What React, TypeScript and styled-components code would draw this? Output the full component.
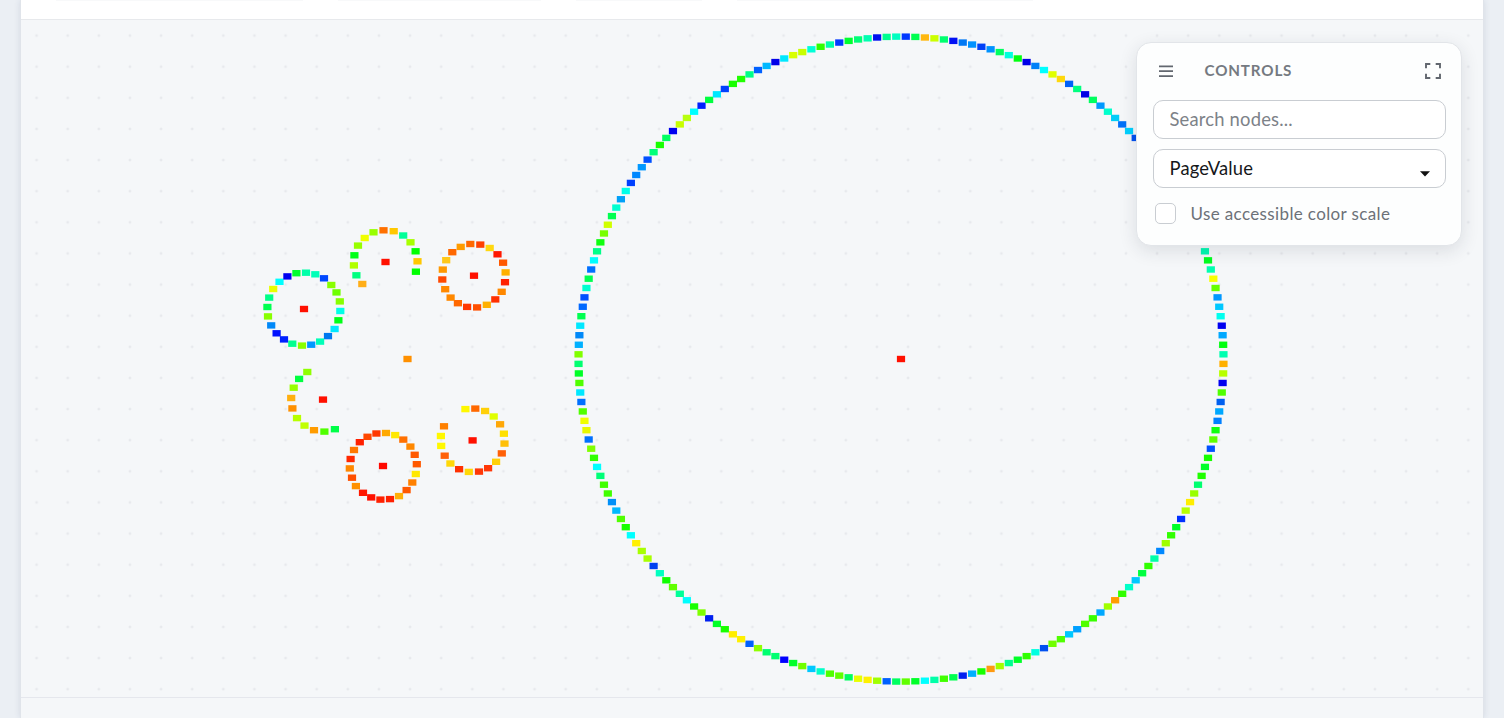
import React from "react";
import styled, { createGlobalStyle } from "styled-components";

type GraphNode = [x: number, y: number, color: string];

const NODE_WIDTH = 8.2;
const NODE_HEIGHT = 6.4;

const GlobalStyle = createGlobalStyle`
  body {
    margin: 0;
    background: #ebeff4;
    font-family: "Lato", "Liberation Sans", sans-serif;
    overflow: hidden;
  }

  * {
    box-sizing: border-box;
  }
`;

const Page = styled.div`
  height: 718px;
  padding: 0 20px;
  overflow: hidden;
`;

const Card = styled.div`
  display: flex;
  flex-direction: column;
  width: 1464px;
  height: 100%;
  border: 1px solid #e0e4ea;
  border-width: 0 1px;
  background: #ffffff;
  box-shadow: 0 0 6px rgba(40, 60, 100, 0.12);
`;

const TopStrip = styled.div`
  display: flex;
  gap: 35px;
  height: 19px;
  padding-left: 35px;
`;

const StripItem = styled.div<{ $width: number }>`
  width: ${(props) => props.$width}px;
  height: 1px;
  background: #f8f9fa;
`;

const Stage = styled.div`
  position: relative;
  height: 679px;
  border-top: 1px solid #e7e9ec;
  border-bottom: 1px solid #e5e7ed;
  background-color: #f5f7f9;
  background-image: radial-gradient(circle, #e7e9ed 0.8px, transparent 1.8px);
  background-size: 31.13px 31.13px;
`;

const BottomStrip = styled.div`
  flex: 1;
  background: #f5f7f9;
`;

const GraphCanvas = styled.svg`
  display: block;
  width: 1462px;
  height: 677px;
`;

const Panel = styled.div`
  position: absolute;
  top: 22px;
  right: 21px;
  display: flex;
  flex-direction: column;
  width: 326px;
  height: 204px;
  padding: 0 15.5px;
  border: 1px solid #e2e5e9;
  border-radius: 15px;
  background: #fdfefe;
  box-shadow: 0 5px 18px rgba(30, 40, 60, 0.12);
`;

const PanelHeader = styled.div`
  display: flex;
  align-items: center;
  height: 57px;
  padding: 0 4.5px 2px 6px;
  color: #62676f;
`;

const PanelTitle = styled.div`
  flex: 1;
  margin: -1px 0 0 32px;
  color: #757a81;
  font-size: 15.2px;
  font-weight: 700;
  letter-spacing: 0.85px;
`;

const SearchInput = styled.input`
  width: 293px;
  height: 39px;
  margin: 0 0 10px;
  padding: 0 16px 2px;
  border: 1px solid #c9cdd2;
  border-radius: 10px;
  outline: none;
  background: #ffffff;
  font-family: inherit;
  font-size: 18.4px;
  letter-spacing: 0.18px;

  &::placeholder {
    color: #7d8288;
    opacity: 1;
  }
`;

const SelectBox = styled.div`
  display: flex;
  align-items: center;
  justify-content: space-between;
  width: 293px;
  height: 39px;
  padding: 0 15px 2px 16px;
  border: 1px solid #c9cdd2;
  border-radius: 10px;
  background: #ffffff;
  color: #15171a;
  font-size: 18.4px;
  letter-spacing: 0.15px;

  svg {
    margin-top: 12px;
  }
`;

const CheckRow = styled.label`
  display: flex;
  align-items: center;
  gap: 15px;
  height: 51px;
  padding-left: 2px;
  color: #6c7178;
  font-size: 17px;
  letter-spacing: 0.37px;
`;

const CheckBox = styled.span`
  width: 21px;
  height: 21px;
  border: 1px solid #c9cdd2;
  border-radius: 5px;
  background: #ffffff;
`;

// One entry per node, clockwise, starting right of twelve o'clock
const ringColors = `
  0038ff 00ff50 ffb810 ccff00 00ff70 0010f4 0078f4 0092ff 0040f8 0092ff 00ff60 00ffdd 00ff10
  0000e8 0080f8 00ffff e0ff00 ffd80c 0060f8 00ff80 0000e6 00ff60 0098ff 00ffcc 00ccf8 0070f8
  00d0ff 0050f0 00ff60 00c8ff 00ff90 0040f0 60ff00 00ff28 00a8ff 00ffd0 0010f0 00ff60 80ff00
  00c8ff 00ff90 00f8b0 00ff20 00ffb0 f8ff00 66ff00 0098ff 00c8ff 00ffee 0000f0 00a8ff 00ff10
  00ffb0

  ffb000 b8ff00 0000f0 50ff00 0060f0 00a8ff 0080ff 10ff10 60ff00 0050ff 18ff00 00ff28 20ff00
  00ff70 98ff00 ffee00 b8ff00 0030ff 00ff28 30ff00 a0ff00 0088ff 00ffa8 30ff00 00ff40 00c8ff
  00ffc8 30ff00 ff9c00 a0ff00 00a8ff 38ff00 50ff00 00a0ff 00c8ff 50ff00 70ff00 0050f0 00ffe0
  30ff00 00ff28 00ff90 a0ff00 ff9a10 18ff00 00b0ff 0020f0 00ff50 40ff00 00ffa8 00ffff 00ff28
  60ff00

  00ff60 0060ff a0ff00 fff000 e8ff00 00ff60 60ff00 50ff00 00ffc8 00c8ff 70ff00 00ff28 0000ff
  00ff70 00ff70 90ff00 0060ff fff000 ffee00 18ff00 00ff28 0020f0 80ff00 18ff00 00ffff 00ff98
  60ff00 10ff00 00ffc0 0040f0 a8ff00 a8ff00 fff000 00ffff 18ff00 50ff00 00b8ff 0090f8 40ff00
  40ff00 00ff78 00ffff 30ff00 80ff00 0070ff e8f800 f0ff00 50ff00 0070ff 00e8ff 50ff00 00ff28
  00ff70

  80ff00 00b0ff 0088f8 00e8ff 00ff50 0068ff 0050ff 00ffd0 00ff50 0070ff 00ffff 00ff88 10ff10
  78ff00 d0ff00 00ff50 00ffd0 00a0f8 00ffe8 0040ff 0088ff 0098ff 0050ff 00ff78 18ff00 00ff60
  0000f0 c8ff00 b8ff10 00ffff 0020ff 00ff40 00e8ff 0040ff 18ff00 20ff00 00ff88 0060ff 00b8ff
  0000e8 00e8ff d8ff00 c8ff00 00ffd8 30ff00 00ffa8 0038ff 00ff30 00ff78 00ffb0 0010f0 00ff90
  00ffc0
`.trim().split(/\s+/);

const ring: GraphNode[] = ringColors.map((color, i) => {
	const angle = ((i + 0.5) / ringColors.length) * Math.PI * 2;
	return [901 + 322.5 * Math.sin(angle), 359.1 - 322.5 * Math.cos(angle), color];
});

const hubs: GraphNode[] = [
	[901, 359, "ff1000"], [407.5, 359, "ff9000"], [304, 309, "ff1000"], [385.5, 262, "ff1000"],
	[474, 275.7, "ff1000"], [323, 399.6, "ff1000"], [383, 466, "ff0800"], [472.6, 440.4, "ff1000"],
];

const clusters: GraphNode[] = [
	// left
	[306, 272.7, "00ffa8"], [315.3, 274.3, "00ffb8"], [324, 278.3, "0048ff"], [331.3, 285, "88ff00"],
	[336.5, 292.4, "70ff00"], [339.8, 301.4, "88ff00"], [340.3, 311, "00ffe8"], [338.4, 320.3, "00ff18"],
	[334.6, 329, "00e8ff"], [328, 336.1, "0078f0"], [320.1, 341.6, "00ffb8"], [311.2, 344.7, "0098ff"],
	[302, 345.6, "88ff00"], [292.3, 343.7, "00ff90"], [284, 339.4, "0020ff"], [276.6, 333.3, "0010ff"],
	[271.2, 325.4, "0088f8"], [268, 316.4, "88ff00"], [267.4, 307, "00ff50"], [269.2, 297.6, "00ff88"],
	[273.2, 289, "e8ff00"], [279.5, 281.8, "00ffff"], [287.4, 276.4, "0000f0"], [296.4, 273.2, "00ff30"],
	// top
	[362.3, 284, "ffae18"], [356.4, 275.3, "00ff80"], [353.9, 265.4, "b0ff00"], [354.4, 255.3, "00ff18"],
	[358, 245.6, "98ff00"], [364.7, 238, "f0ff00"], [373.5, 232.3, "98ff00"], [383.5, 230.3, "ff7000"],
	[393.7, 231.2, "ffc800"], [403.2, 235.5, "00ff98"], [410.5, 242.3, "a8ff00"], [415.6, 251.3, "00ff00"],
	[417.5, 261.3, "ffc800"], [415.9, 271.7, "00ff00"],
	// top right
	[470.3, 244, "ff6800"], [480.3, 244.6, "ff4000"], [489.7, 248, "ffd810"], [497.5, 254.3, "ff1800"],
	[503.1, 262.7, "ff5800"], [505.6, 272.4, "ffb000"], [505, 282.2, "ff2000"], [501.7, 291.8, "ff8800"],
	[495.3, 299.4, "ff3000"], [486.8, 304.8, "ffb000"], [477.1, 307.4, "ff5000"], [467.1, 306.9, "ff3800"],
	[457.9, 303.2, "ff6800"], [450.6, 297.6, "ff8800"], [445.2, 289.2, "ff8800"], [442.3, 279.5, "ff4800"],
	[442.8, 269.6, "ff9800"], [446.2, 260.2, "ffc818"], [452.3, 252.2, "ff6800"], [460.7, 246.9, "ff9c00"],
	// bottom left
	[307.3, 372, "90ff00"], [299.1, 378.9, "00ff40"], [293.7, 387.7, "98ff00"], [291.2, 398, "ffb010"],
	[292.4, 408.4, "ff9000"], [297, 418.1, "b8ff00"], [304.5, 425.6, "c0ff00"], [314, 430.2, "ff9c00"],
	[324.4, 431.6, "50ff00"], [334.9, 429.2, "00ff48"],
	// bottom
	[386, 433, "ffa800"], [395.2, 435.1, "ffe800"], [403.3, 439.6, "ff7000"], [410.4, 446.6, "ff8800"],
	[414.7, 454.8, "ff5800"], [416.8, 464.2, "ff5800"], [415.8, 474, "ffe800"], [412.3, 482.5, "ff8000"],
	[406.6, 490.1, "ff5800"], [399, 496.1, "ffb008"], [390, 499.1, "ff2000"], [380.4, 499.6, "ff2000"],
	[371.2, 497.4, "ff1000"], [363, 492.8, "ff1800"], [355.9, 486.1, "ff9000"], [352, 477.7, "ff5000"],
	[349.8, 468.4, "ff8800"], [350.6, 459, "ff2800"], [354, 450, "ff7800"], [359.8, 442.2, "ff2000"],
	[367.5, 436.8, "ff4800"], [376.4, 433.5, "ff3800"],
	// bottom right
	[465.4, 409.1, "fff800"], [475.3, 408.6, "ff6800"], [485.1, 411, "ffd008"], [493.7, 416.5, "e0ff00"],
	[500.1, 424.3, "ffa808"], [503.9, 433.7, "ffe000"], [504.5, 443.6, "ffc008"], [501.8, 453.4, "ff6008"],
	[496.1, 461.8, "ffd008"], [488.1, 468.2, "ff3808"], [479, 471.6, "ff3808"], [468.8, 471.9, "ffd808"],
	[459.1, 469.2, "ff3000"], [450.4, 463.5, "ffd808"], [444.7, 455.7, "ff6008"], [441.2, 445.9, "fff800"],
	[440.9, 436, "fff800"], [444, 426.3, "ff8000"],
];

const nodes = [...ring, ...hubs, ...clusters];

function Graph() {
	return (
		<GraphCanvas viewBox="21 20 1462 677">
			{nodes.map(([x, y, color], i) => (
				<rect
					key={i}
					x={x - NODE_WIDTH / 2}
					y={y - NODE_HEIGHT / 2}
					width={NODE_WIDTH}
					height={NODE_HEIGHT}
					fill={`#${color}`}
				/>
			))}
		</GraphCanvas>
	);
}

function Controls() {
	return (
		<Panel>
			<PanelHeader>
				<svg width="14" height="14" fill="none" stroke="currentColor" strokeWidth="1.8">
					<path d="M0 2.3h14M0 7.2h14M0 12.1h14" />
				</svg>
				<PanelTitle>CONTROLS</PanelTitle>
				<svg width="16" height="16" fill="none" stroke="currentColor" strokeWidth="1.9">
					<path d="M1 5.3V1H5.3M10.7 1H15V5.3M15 10.7V15H10.7M5.3 15H1V10.7" />
				</svg>
			</PanelHeader>
			<SearchInput placeholder="Search nodes..." />
			<SelectBox>
				PageValue
				<svg width="10" height="6">
					<path d="M0 .3h10L5 5.6z" fill="#111111" />
				</svg>
			</SelectBox>
			<CheckRow>
				<CheckBox />
				Use accessible color scale
			</CheckRow>
		</Panel>
	);
}

export default function App() {
	return (
		<>
			<GlobalStyle />
			<Page>
				<Card>
					<TopStrip>
						<StripItem $width={247} />
						<StripItem $width={203} />
						<StripItem $width={126} />
						<StripItem $width={296} />
					</TopStrip>
					<Stage>
						<Graph />
						<Controls />
					</Stage>
					<BottomStrip />
				</Card>
			</Page>
		</>
	);
}
